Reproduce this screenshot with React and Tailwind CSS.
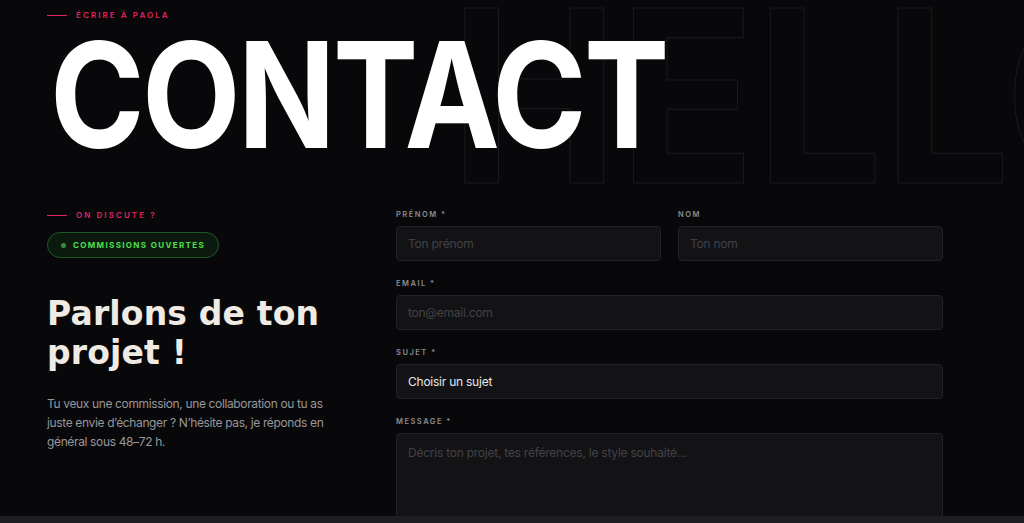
import React from 'react';

const font = { fontFamily: 'Inter, "Noto Sans", sans-serif' };

function Eyebrow({ children }) {
  return (
    <div className="flex items-center gap-[9px]">
      <span className="h-px w-[20px] bg-[#e0245e]" />
      <span className="text-[8px] font-semibold uppercase leading-[10px] tracking-[0.26em] text-[#e0245e]">
        {children}
      </span>
    </div>
  );
}

function Label({ children }) {
  return (
    <label className="mb-[6px] block text-[7.5px] font-semibold uppercase leading-[10px] tracking-[0.2em] text-[#8c8c90]">
      {children}
    </label>
  );
}

const field =
  'h-[35px] w-full rounded-[4px] border border-[#222226] bg-[#131316] px-[11px] text-[12px] tracking-[-0.02em] text-[#e6e6e6] placeholder:text-[#424246] outline-none';

export default function App() {
  return (
    <div className="flex h-[523px] flex-col overflow-hidden bg-[#08080a]" style={font}>
      <div className="relative flex-1 overflow-hidden">
        {/* watermark */}
        <div
          aria-hidden
          className="pointer-events-none absolute left-[450px] top-[-24px] origin-left scale-x-[0.94] select-none whitespace-nowrap text-[240px] font-bold leading-none text-transparent [-webkit-text-stroke:1px_#1c1c20]"
        >
          HELLO
        </div>

        <div className="relative px-[47px] pt-[10px]">
          <Eyebrow>Écrire à Paola</Eyebrow>
          <h1 className="ml-[3px] origin-left scale-x-[0.87] whitespace-nowrap text-[147px] font-bold leading-[150px] tracking-[-0.02em] text-white">
            CONTACT
          </h1>

          <div className="mt-[40px] flex">
            <div className="w-[349px] shrink-0">
              <Eyebrow>On discute ?</Eyebrow>
              <div className="mt-[12px] inline-flex h-[26px] items-center gap-[7px] rounded-full border border-[#1f5a26] bg-[#0c190e] pl-[13px] pr-[13px]">
                <span className="h-[5px] w-[5px] rounded-full bg-[#3c8a40]" />
                <span className="text-[8px] font-bold uppercase tracking-[0.17em] text-[#4ee04f]">
                  Commissions ouvertes
                </span>
              </div>
              <h2
                className="mt-[36px] text-[33px] font-bold leading-[39px] tracking-[0.005em] text-[#efebe4]"
                style={{ fontFamily: '"DejaVu Sans", sans-serif' }}
              >
                Parlons de ton
                <br />
                projet !
              </h2>
              <p className="mt-[22px] w-[285px] text-[12px] leading-[19px] tracking-[-0.03em] text-[#97979b]">
                Tu veux une commission, une collaboration ou tu as juste envie d’échanger ? N’hésite pas, je réponds en
                général sous 48–72 h.
              </p>
            </div>

            <form className="w-[547px] shrink-0">
              <div className="flex gap-[17px]">
                <div className="flex-1">
                  <Label>Prénom *</Label>
                  <input className={field} placeholder="Ton prénom" />
                </div>
                <div className="flex-1">
                  <Label>Nom</Label>
                  <input className={field} placeholder="Ton nom" />
                </div>
              </div>
              <div className="mt-[18px]">
                <Label>Email *</Label>
                <input className={field} placeholder="ton@email.com" />
              </div>
              <div className="mt-[18px]">
                <Label>Sujet *</Label>
                <div className={field + ' flex items-center'}>Choisir un sujet</div>
              </div>
              <div className="mt-[18px]">
                <Label>Message *</Label>
                <textarea
                  className="h-[140px] w-full resize-none rounded-[4px] border border-[#222226] bg-[#131316] px-[11px] py-[10px] text-[12px] tracking-[-0.02em] text-[#e6e6e6] outline-none placeholder:text-[#424246]"
                  placeholder="Décris ton projet, tes références, le style souhaité..."
                />
              </div>
            </form>
          </div>
        </div>
      </div>
      <div className="h-[7px] shrink-0 bg-[#1e1e20]" />
    </div>
  );
}
